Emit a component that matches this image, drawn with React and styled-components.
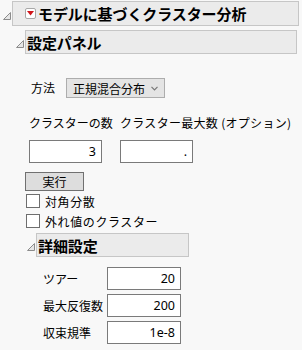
import React from "react";
import styled, { createGlobalStyle } from "styled-components";

const GlobalStyle = createGlobalStyle`
  html, body {
    margin: 0;
    padding: 0;
    background: #f8f8f8;
  }
  body {
    font-family: "Noto Sans CJK JP", "Noto Sans", sans-serif;
    color: #000;
  }
`;

const Page = styled.div`
  width: 302px;
  height: 350px;
  padding-top: 1px;
  box-sizing: border-box;
  overflow: hidden;
`;

const Head = styled.div`
  display: flex;
  align-items: center;
  height: ${(p) => p.$h}px;
  padding-left: ${(p) => p.$pad}px;
  padding-right: ${(p) => p.$right || 0}px;
  margin-top: ${(p) => p.$top || 0}px;
  box-sizing: border-box;
`;

const ToggleIcon = styled.svg`
  width: 8px;
  height: 8px;
  flex: none;
  margin-right: 1px;
  margin-top: 4px;
`;

const Title = styled.div`
  display: flex;
  align-items: center;
  gap: 2px;
  height: 100%;
  width: ${(p) => (p.$w ? `${p.$w}px` : "auto")};
  flex: ${(p) => (p.$w ? "none" : "1")};
  box-sizing: border-box;
  padding-left: 1px;
  background: #ebebeb;
  border: 1px solid #c6c6c6;
  font-weight: bold;
  font-size: 15px;
  letter-spacing: -0.1px;
  white-space: nowrap;
`;

const MenuIcon = styled.span`
  display: flex;
  align-items: center;
  justify-content: center;
  width: 11px;
  height: 11px;
  margin-left: 11px;
  box-sizing: border-box;
  border: 1px solid #a8a8a8;
  border-radius: 2px;
  background: #fff;
`;

const Panel = styled.div`
  padding-left: 25px;
  font-size: 12px;
`;

const MethodRow = styled.div`
  display: flex;
  align-items: center;
  margin-top: 24px;
  padding-left: 6px;
  height: 20px;
`;

const Label = styled.span`
  width: ${(p) => p.$w}px;
  flex: none;
  line-height: 16px;
  white-space: nowrap;
  letter-spacing: ${(p) => p.$ls || 0}px;
`;

const Select = styled.div`
  display: flex;
  align-items: center;
  justify-content: space-between;
  width: 99px;
  height: 20px;
  box-sizing: border-box;
  padding: 0 6px 0 6px;
  background: #e4e4e4;
  border: 1px solid #adadad;
`;

const ClusterGrid = styled.div`
  display: grid;
  grid-template-columns: 91px auto;
  row-gap: 9px;
  margin-top: 17px;
  padding-left: 4px;
`;

const NumBox = styled.div`
  width: ${(p) => p.$w || 74}px;
  height: 23px;
  box-sizing: border-box;
  border: 1px solid #7a7a7a;
  background: #fff;
  display: flex;
  align-items: center;
  justify-content: flex-end;
  padding-right: 5px;
  font-family: "Noto Sans", "Open Sans", sans-serif;
  font-size: 12.5px;
`;

const Button = styled.div`
  width: 59px;
  height: 19px;
  margin-top: 9px;
  box-sizing: border-box;
  border: 1px solid #707070;
  background: #dddddd;
  display: flex;
  align-items: center;
  justify-content: center;
  font-size: 12px;
`;

const CheckRow = styled.label`
  display: flex;
  align-items: center;
  height: 20px;
  padding-left: 1px;
  gap: 5px;
  letter-spacing: 0.6px;
`;

const CheckBox = styled.span`
  width: 14px;
  height: 14px;
  box-sizing: border-box;
  border: 1px solid #6e6e6e;
  background: #fff;
  flex: none;
`;

const DetailGrid = styled.div`
  display: grid;
  grid-template-columns: 64px auto;
  row-gap: 4px;
  align-items: center;
  margin-top: 10px;
  padding-left: 18px;
`;

const Toggle = () => (
  <ToggleIcon viewBox="0 0 8 8">
    <polygon points="7.5,0.5 7.5,7.5 0.5,7.5" fill="#e6e6e6" stroke="#8c8c8c" strokeWidth="1" />
  </ToggleIcon>
);

export default function App() {
  return (
    <Page>
      <GlobalStyle />
      <Head $h={25} $pad={3} $right={3}>
        <Toggle />
        <Title>
          <MenuIcon>
            <svg width="7" height="5" viewBox="0 0 7 5">
              <polygon points="0,0 7,0 3.5,4.5" fill="#d0161b" />
            </svg>
          </MenuIcon>
          モデルに基づくクラスター分析
        </Title>
      </Head>
      <Head $h={24} $pad={16} $right={5} $top={4}>
        <Toggle />
        <Title>設定パネル</Title>
      </Head>
      <Panel>
        <MethodRow>
          <Label $w={35}>方法</Label>
          <Select>
            <span>正規混合分布</span>
            <svg width="7" height="5" viewBox="0 0 7 5">
              <polyline points="0.5,0.8 3.5,3.8 6.5,0.8" fill="none" stroke="#777" strokeWidth="1.2" />
            </svg>
          </Select>
        </MethodRow>
        <ClusterGrid>
          <Label>クラスターの数</Label>
          <Label $ls={0.3}>クラスター最大数 (オプション)</Label>
          <NumBox $w={73}>3</NumBox>
          <NumBox $w={73}>.</NumBox>
        </ClusterGrid>
        <Button>実行</Button>
        <CheckRow>
          <CheckBox />
          対角分散
        </CheckRow>
        <CheckRow>
          <CheckBox />
          外れ値のクラスター
        </CheckRow>
        <Head $h={24} $pad={2} $top={2}>
          <Toggle />
          <Title $w={153}>詳細設定</Title>
        </Head>
        <DetailGrid>
          <Label>ツアー</Label>
          <NumBox>20</NumBox>
          <Label>最大反復数</Label>
          <NumBox>200</NumBox>
          <Label>収束規準</Label>
          <NumBox>1e-8</NumBox>
        </DetailGrid>
      </Panel>
    </Page>
  );
}
